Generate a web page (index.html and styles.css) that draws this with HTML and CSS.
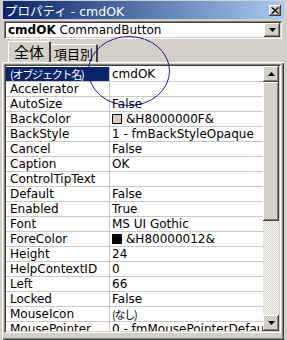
FILE: index.html
```html
<!DOCTYPE html>
<html lang="ja">
<head>
  <meta charset="UTF-8" />
  <title>プロパティ - cmdOK</title>
  <link rel="stylesheet" href="styles.css">
</head>
<body>
  <div class="window">
    <div class="titlebar">
      <span class="title">プロパティ - cmdOK</span>
      <span class="btn close">
        <svg width="8" height="7" viewBox="0 0 8 7"><path d="M0.5 0.5 L7 6.5 M1.5 0.5 L8 6.5 M7 0.5 L0.5 6.5 M8 0.5 L1.5 6.5" stroke="#000" stroke-width="1"/></svg>
      </span>
    </div>

    <div class="combo">
      <span class="combo-text"><b>cmdOK</b> CommandButton</span>
      <span class="btn drop">
        <svg width="7" height="4" viewBox="0 0 7 4"><polygon points="0,0 7,0 3.5,4" fill="#000"/></svg>
      </span>
    </div>

    <div class="tabs">
      <span class="tab active">全体</span>
      <span class="tab">項目別</span>
    </div>

    <div class="panel">
      <div class="grid">
        <div class="rows">
          <div class="row sel"><span class="name"><span class="jp">(オブジェクト名)</span></span><span class="val">cmdOK</span></div>
          <div class="row"><span class="name">Accelerator</span><span class="val"></span></div>
          <div class="row"><span class="name">AutoSize</span><span class="val">False</span></div>
          <div class="row"><span class="name">BackColor</span><span class="val"><i class="swatch face"></i>&amp;H8000000F&amp;</span></div>
          <div class="row"><span class="name">BackStyle</span><span class="val">1 - fmBackStyleOpaque</span></div>
          <div class="row"><span class="name">Cancel</span><span class="val">False</span></div>
          <div class="row"><span class="name">Caption</span><span class="val">OK</span></div>
          <div class="row"><span class="name">ControlTipText</span><span class="val"></span></div>
          <div class="row"><span class="name">Default</span><span class="val">False</span></div>
          <div class="row"><span class="name">Enabled</span><span class="val">True</span></div>
          <div class="row"><span class="name">Font</span><span class="val">MS UI Gothic</span></div>
          <div class="row"><span class="name">ForeColor</span><span class="val"><i class="swatch black"></i>&amp;H80000012&amp;</span></div>
          <div class="row"><span class="name">Height</span><span class="val">24</span></div>
          <div class="row"><span class="name">HelpContextID</span><span class="val">0</span></div>
          <div class="row"><span class="name">Left</span><span class="val">66</span></div>
          <div class="row"><span class="name">Locked</span><span class="val">False</span></div>
          <div class="row"><span class="name">MouseIcon</span><span class="val"><span class="jp">(なし)</span></span></div>
          <div class="row"><span class="name">MousePointer</span><span class="val">0 - fmMousePointerDefault</span></div>
        </div>
        <div class="scroll">
          <span class="btn sbtn">
            <svg width="7" height="4" viewBox="0 0 7 4"><polygon points="3.5,0 7,4 0,4" fill="#000"/></svg>
          </span>
          <span class="btn thumb"></span>
          <span class="track"></span>
          <span class="btn sbtn">
            <svg width="7" height="4" viewBox="0 0 7 4"><polygon points="0,0 7,0 3.5,4" fill="#000"/></svg>
          </span>
        </div>
      </div>
    </div>

    <!-- 手書きの丸印 -->
    <svg class="circle" width="84" height="72" viewBox="0 0 84 72">
      <ellipse cx="42" cy="36" rx="40.5" ry="34.5" fill="none" stroke="#1818a8" stroke-width="1"/>
    </svg>
  </div>
</body>
</html>
```

FILE: styles.css
```css
body { margin: 0; background: #d4d0c8; }
.window { position: relative; width: 287px; height: 340px; box-sizing: border-box; padding: 1px 3px 0 3px; background: #d4d0c8; overflow: hidden; font-family: "DejaVu Sans", "Noto Sans CJK JP", sans-serif; font-size: 12px; color: #000; }

.titlebar { height: 18px; display: flex; align-items: center; justify-content: space-between; padding: 0 2px 0 2px; background: linear-gradient(to right, #0a246a, #a6caf0); }
.title { color: #fff; font-size: 12.5px; font-family: "DejaVu Sans", "Noto Sans CJK JP", sans-serif; }

.btn { display: flex; align-items: center; justify-content: center; box-sizing: border-box; background: #d4d0c8; box-shadow: inset -1px -1px #404040, inset 1px 1px #fff, inset -2px -2px #808080, inset 2px 2px #d4d0c8; }
.close { width: 12px; height: 11px; margin-right: 1px; }

.combo { display: flex; align-items: center; justify-content: space-between; height: 18px; box-sizing: border-box; margin: 2px 2px 0 1px; padding: 2px; background: #fff; box-shadow: inset 1px 1px #808080, inset -1px -1px #fff, inset 2px 2px #404040, inset -2px -2px #d4d0c8; }
.combo-text { padding-left: 2px; line-height: 14px; }
.drop { width: 16px; height: 14px; }

.tabs { display: flex; align-items: flex-end; height: 21px; margin-top: 2px; padding-left: 5px; }
.tab { height: 18px; padding: 0 3px; box-sizing: border-box; font-family: "Noto Sans CJK JP", sans-serif; font-size: 13px; line-height: 17px; border-top: 1px solid #fff; border-left: 1px solid #fff; border-right: 2px solid #404040; border-radius: 2px 2px 0 0; }
.tab.active { height: 21px; padding: 0 5px; margin-right: -1px; line-height: 19px; font-size: 15px; position: relative; z-index: 1; }

.panel { height: 278px; margin-left: -1px; padding: 2px 3px 3px 2px; box-sizing: border-box; box-shadow: inset 1px 1px #fff, inset -1px -1px #404040, inset -2px -2px #808080; }
.grid { display: flex; height: 269px; box-sizing: border-box; padding: 2px; background: #fff; box-shadow: inset 1px 1px #808080, inset -1px -1px #fff, inset 2px 2px #404040, inset -2px -2px #d4d0c8; }
.rows { flex: 1; overflow: hidden; padding-top: 1px; }
.row { display: flex; height: 15px; box-sizing: border-box; border-bottom: 1px solid #c8c8c8; line-height: 14px; white-space: nowrap; }
.name { width: 99px; flex: none; padding-left: 4px; border-right: 1px solid #c8c8c8; overflow: hidden; }
.val { flex: 1; padding-left: 2px; display: flex; align-items: center; overflow: hidden; }
.sel .name { background: #0a246a; color: #fff; }
.jp { font-family: "Noto Sans CJK JP", sans-serif; font-size: 11px; letter-spacing: -1.2px; }
.swatch { display: inline-block; width: 10px; height: 10px; box-sizing: border-box; margin-right: 4px; border: 1px solid #000; }
.swatch.face { background: #d4d0c8; }
.swatch.black { background: #000; }

.scroll { width: 16px; display: flex; flex-direction: column; }
.sbtn { height: 16px; flex: none; }
.thumb { height: 139px; flex: none; }
.track { flex: 1; background: repeating-conic-gradient(#fff 0 25%, #d4d0c8 0 50%) 0 0 / 2px 2px; }

.circle { position: absolute; left: 87px; top: 35px; }
```
